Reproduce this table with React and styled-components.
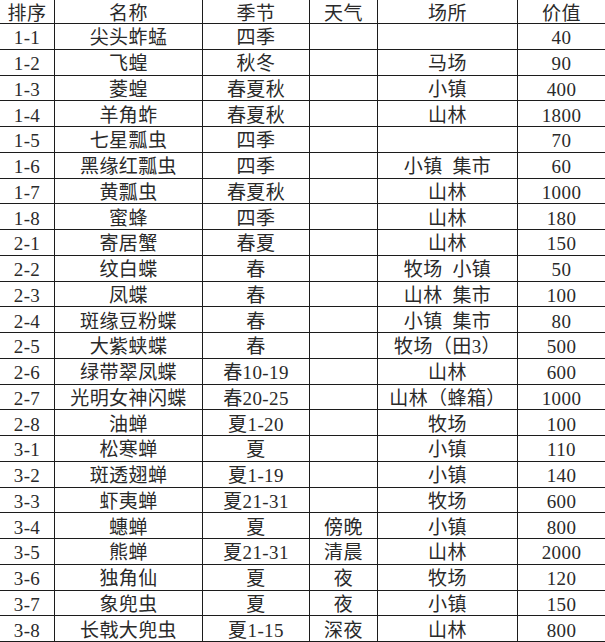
import styled, { createGlobalStyle } from 'styled-components';

const GlobalStyle = createGlobalStyle`
  html, body {
    margin: 0;
    padding: 0;
    background: #ffffff;
  }
`;

const columns = ['排序', '名称', '季节', '天气', '场所', '价值'];

const rows = [
    ['1-1', '尖头蚱蜢', '四季', '', '', '40'],
    ['1-2', '飞蝗', '秋冬', '', '马场', '90'],
    ['1-3', '菱蝗', '春夏秋', '', '小镇', '400'],
    ['1-4', '羊角蚱', '春夏秋', '', '山林', '1800'],
    ['1-5', '七星瓢虫', '四季', '', '', '70'],
    ['1-6', '黑缘红瓢虫', '四季', '', '小镇\u2002集市', '60'],
    ['1-7', '黄瓢虫', '春夏秋', '', '山林', '1000'],
    ['1-8', '蜜蜂', '四季', '', '山林', '180'],
    ['2-1', '寄居蟹', '春夏', '', '山林', '150'],
    ['2-2', '纹白蝶', '春', '', '牧场\u2002小镇', '50'],
    ['2-3', '凤蝶', '春', '', '山林\u2002集市', '100'],
    ['2-4', '斑缘豆粉蝶', '春', '', '小镇\u2002集市', '80'],
    ['2-5', '大紫蛱蝶', '春', '', '牧场（田3）', '500'],
    ['2-6', '绿带翠凤蝶', '春10-19', '', '山林', '600'],
    ['2-7', '光明女神闪蝶', '春20-25', '', '山林（蜂箱）', '1000'],
    ['2-8', '油蝉', '夏1-20', '', '牧场', '100'],
    ['3-1', '松寒蝉', '夏', '', '小镇', '110'],
    ['3-2', '斑透翅蝉', '夏1-19', '', '小镇', '140'],
    ['3-3', '虾夷蝉', '夏21-31', '', '牧场', '600'],
    ['3-4', '蟪蝉', '夏', '傍晚', '小镇', '800'],
    ['3-5', '熊蝉', '夏21-31', '清晨', '山林', '2000'],
    ['3-6', '独角仙', '夏', '夜', '牧场', '120'],
    ['3-7', '象兜虫', '夏', '夜', '小镇', '150'],
    ['3-8', '长戟大兜虫', '夏1-15', '深夜', '山林', '800'],
];

const App = () => {
    return (
        <>
            <GlobalStyle />
            <Sheet>
                {columns.map((c, i) => (
                    <Cell key={c} $last={i === columns.length - 1}>{c}</Cell>
                ))}
                {rows.map((row) =>
                    row.map((v, i) => (
                        <Cell key={row[0] + i} $last={i === row.length - 1}>{v}</Cell>
                    ))
                )}
            </Sheet>
        </>
    );
};

export default App;

const Sheet = styled.div`
    display: grid;
    grid-template-columns: 55px 148px 107px 68px 140px 87px;
    grid-template-rows: 24px repeat(24, 25.75px);
    width: 605px;
    background: #ffffff;
    font-family: "Liberation Serif", "Noto Sans CJK SC", serif;
    font-size: 19px;
    color: #2a2a2a;
`;

const Cell = styled.div`
    display: flex;
    align-items: center;
    justify-content: center;
    box-sizing: border-box;
    padding-top: 3px;
    white-space: nowrap;
    overflow: hidden;
    line-height: 1;
    letter-spacing: 0.4px;
    border-bottom: 1px solid #1c1c1c;
    border-right: ${(p) => (p.$last ? 'none' : '1px solid #1c1c1c')};
`;
